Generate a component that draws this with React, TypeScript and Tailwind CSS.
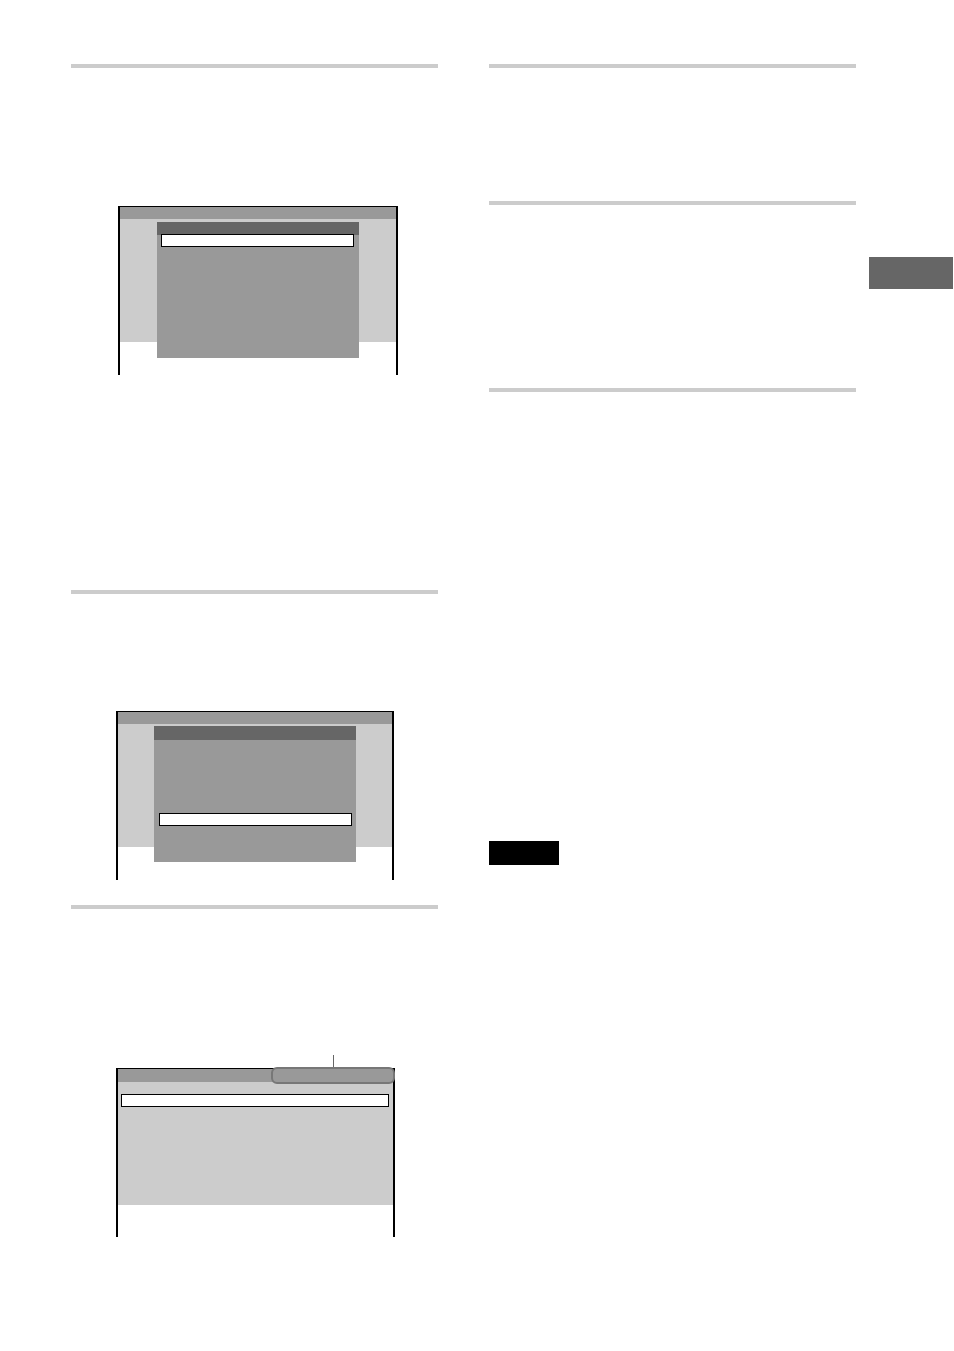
import React from "react";

function Rule({ className = "" }: { className?: string }) {
  return <div className={`h-[4px] w-[367px] bg-[#cccccc] ${className}`} />;
}

function MenuScreen({
  width,
  panelLeft,
  panelTop,
  headerH,
  barLeft,
  barTop,
}: {
  width: string;
  panelLeft: string;
  panelTop: string;
  headerH: string;
  barLeft: string;
  barTop: string;
}) {
  return (
    <div className={`relative flex h-[169px] flex-col border-x-2 border-t border-black ${width}`}>
      <div className="h-[12px] bg-[#999999]" />
      <div className="h-[123px] bg-[#cccccc]" />
      <div className="flex-1 bg-white" />
      {/* dialog panel over the screen */}
      <div className={`absolute flex h-[136px] w-[202px] flex-col bg-[#999999] ${panelLeft} ${panelTop}`}>
        <div className={`bg-[#666666] ${headerH}`} />
        <div className={`absolute h-[13px] w-[193px] border border-black bg-white ${barLeft} ${barTop}`} />
      </div>
    </div>
  );
}

export default function App() {
  return (
    <div className="relative flex h-[1351px] w-[954px] bg-white font-['Liberation_Sans',sans-serif]">
      {/* left column */}
      <div className="ml-[71px] flex w-[367px] flex-col pt-[64px]">
        <Rule />
        <div className="ml-[47px] mt-[138px]">
          <MenuScreen
            width="w-[280px]"
            panelLeft="left-[37px]"
            panelTop="top-[15px]"
            headerH="h-[13px]"
            barLeft="left-[4px]"
            barTop="top-[12px]"
          />
        </div>
        <Rule className="mt-[215px]" />
        <div className="ml-[45px] mt-[117px]">
          <MenuScreen
            width="w-[278px]"
            panelLeft="left-[36px]"
            panelTop="top-[14px]"
            headerH="h-[14px]"
            barLeft="left-[5px]"
            barTop="top-[87px]"
          />
        </div>
        <Rule className="mt-[25px]" />
        {/* screen with callout */}
        <div className="relative ml-[45px] mt-[146px] w-[279px] pt-[13px]">
          <div className="absolute left-[217px] top-0 h-[13px] w-px bg-[#666666]" />
          <div className="relative flex h-[169px] flex-col border-x-2 border-t border-black">
            <div className="h-[13px] bg-[#999999]" />
            <div className="flex h-[123px] flex-col bg-[#cccccc] px-[3px] pt-[12px]">
              <div className="h-[13px] w-[268px] border border-black bg-white" />
            </div>
            <div className="flex-1 bg-white" />
            <div className="absolute left-[153px] top-[-2px] h-[17px] w-[124px] rounded-[6px] border-2 border-[#777777] bg-[#999999]" />
          </div>
        </div>
      </div>

      {/* right column */}
      <div className="ml-[51px] flex w-[367px] flex-col pt-[64px]">
        <Rule />
        <Rule className="mt-[133px]" />
        <Rule className="mt-[183px]" />
        <div className="mt-[449px] h-[24px] w-[70px] bg-black" />
      </div>

      {/* side tab */}
      <div className="ml-[13px] mt-[257px] h-[32px] w-[84px] bg-[#666666]" />
    </div>
  );
}
